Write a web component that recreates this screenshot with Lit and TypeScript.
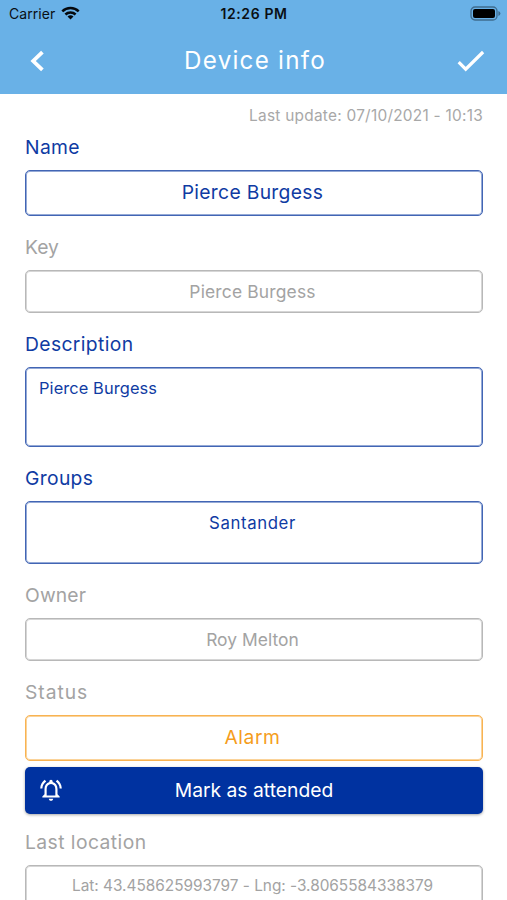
import { LitElement, html, css, nothing } from "lit";
import { customElement, property } from "lit/decorators.js";

type Tone = "editable" | "readonly" | "alarm";

interface Field {
  label: string;
  labelTracking: number;
  value: string;
  tracking: number;
  tone: Tone;
  size: "large" | "medium" | "area" | "group" | "location";
  action?: string;
}

const FIELDS: Field[] = [
  { label: "Name", labelTracking: 0.36, value: "Pierce Burgess", tracking: 0.31, tone: "editable", size: "large" },
  { label: "Key", labelTracking: 0, value: "Pierce Burgess", tracking: 0.18, tone: "readonly", size: "medium" },
  { label: "Description", labelTracking: 0.38, value: "Pierce Burgess", tracking: 0.1, tone: "editable", size: "area" },
  { label: "Groups", labelTracking: 0.33, value: "Santander", tracking: 0.6, tone: "editable", size: "group" },
  { label: "Owner", labelTracking: 0.15, value: "Roy Melton", tracking: 0.05, tone: "readonly", size: "medium" },
  { label: "Status", labelTracking: 0.95, value: "Alarm", tracking: 0.55, tone: "alarm", size: "large", action: "Mark as attended" },
  { label: "Last location", labelTracking: 0.44, value: "Lat: 43.458625993797 - Lng: -3.8065584338379", tracking: -0.02, tone: "readonly", size: "location" },
];

@customElement("status-bar")
export class StatusBar extends LitElement {
  static styles = css`
    :host { display: grid; grid-template-columns: 1fr auto 1fr; height: 28px; align-items: center; color: #0a0f14; }
    .carrier { display: flex; align-items: center; gap: 6px; padding-left: 9px; font: 400 14px/28px Inter, sans-serif; letter-spacing: 0.06px; }
    .time { font: 600 14px/28px Inter, sans-serif; letter-spacing: 0.62px; padding-left: 1px; }
    .battery { justify-self: end; margin-right: 6px; display: block; margin-top: -1px; }
    .wifi { display: block; margin-top: -2px; }
  `;
  render() {
    return html`
      <div class="carrier">
        <span>Carrier</span>
        <svg class="wifi" width="19" height="14" viewBox="0 0 19 14">
          <g fill="none" stroke="#05090d" stroke-width="2.5">
            <path d="M1.3 5.3a11.7 11.7 0 0 1 16.4 0" />
            <path d="M4.4 8.5a7.3 7.3 0 0 1 10.2 0" />
          </g>
          <path d="M9.5 13.6L6.5 10.6a4.3 4.3 0 0 1 6 0z" fill="#05090d" />
        </svg>
      </div>
      <div class="time">12:26 PM</div>
      <svg class="battery" width="31" height="15" viewBox="0 0 31 15">
        <rect x="1" y="1" width="26" height="13" rx="4" fill="none" stroke="#3f6c8f" stroke-width="1.3" />
        <rect x="3" y="3" width="22" height="9" rx="2" fill="#000" />
        <path d="M28.4 5.1q2 .8 2 2.4t-2 2.4z" fill="#3f6c8f" />
      </svg>
    `;
  }
}

@customElement("device-field")
export class DeviceField extends LitElement {
  @property({ attribute: false }) field!: Field;

  static styles = css`
    :host { display: block; }
    .editable { --ink: #0f3ba3; --line: #4265b4; --soft: #94a9d6; }
    .readonly { --ink: #a3a3a3; --line: #b8b8b8; --soft: #d6d6d6; }
    .alarm { --ink: #f59d1c; --line: #f8b352; --soft: #fbd399; }
    .label { font-size: 19.3px; line-height: 24px; color: #a3a3a3; white-space: nowrap; }
    .editable .label { color: var(--ink); }
    .box {
      box-sizing: border-box; margin-top: 11px; border: 1px solid var(--line); border-radius: 5px;
      box-shadow: inset 0 0 0 1px var(--soft); color: var(--ink); text-align: center;
      white-space: nowrap; padding-right: 3px;
    }
    .large { height: 46px; font-size: 19.3px; line-height: 43px; }
    .medium { height: 43px; font-size: 17.4px; line-height: 42px; }
    .area { height: 80px; font-size: 16.4px; line-height: 20px; text-align: left; padding: 10px 13px; }
    .group { height: 63px; font-size: 16.8px; line-height: 20px; padding-top: 11px; }
    .location { height: 43px; font-size: 15.4px; line-height: 40px; }
    .action {
      display: grid; grid-template-columns: 50px 1fr 50px; align-items: center; width: 100%; height: 47px;
      margin-top: 6px; padding: 0; border: 0; border-radius: 5px; background: #0032a0; color: #fff;
      font: 400 19.3px/47px Inter, sans-serif; box-shadow: 0 1px 3px rgba(0, 0, 0, 0.35);
    }
    .bell { display: block; margin: -2px 0 0 13px; }
    .caption { height: 47px; }
  `;

  render() {
    const f = this.field;
    return html`
      <div class=${f.tone}>
        <div class="label" style="letter-spacing:${f.labelTracking}px">${f.label}</div>
        <div class="box ${f.size}" style="letter-spacing:${f.tracking}px">${f.value}</div>
      </div>
      ${f.action
        ? html`<button class="action">
            <svg class="bell" width="26" height="26" viewBox="0 0 24 24" fill="#fff">
              <path d="M12 22c1.1 0 2-.9 2-2h-4c0 1.1.9 2 2 2zm6-6v-5c0-3.07-1.63-5.64-4.5-6.32V4c0-.83-.67-1.5-1.5-1.5s-1.5.67-1.5 1.5v.68C7.64 5.36 6 7.92 6 11v5l-2 2v1h16v-1l-2-2zm-2 1H8v-6c0-2.48 1.51-4.5 4-4.5s4 2.02 4 4.5v6zM7.58 4.08L6.15 2.65C3.75 4.48 2.17 7.3 2.03 10.5h2a8.445 8.445 0 0 1 3.55-6.42zm12.39 6.42h2c-.15-3.2-1.73-6.02-4.12-7.85l-1.42 1.43a8.495 8.495 0 0 1 3.54 6.42z" />
            </svg>
            <span class="caption">${f.action}</span>
          </button>`
        : nothing}
    `;
  }
}

@customElement("app-root")
export class AppRoot extends LitElement {
  static styles = css`
    :host { display: block; height: 900px; overflow: hidden; background: #fff; font-family: Inter, sans-serif; }
    .header { height: 94px; background: #69b1e7; }
    .nav { display: grid; grid-template-columns: 50px 1fr 50px; height: 64px; align-items: center; color: #fff; }
    .back { display: block; margin-left: 30px; }
    .check { display: block; }
    .title { text-align: center; font-size: 24.2px; line-height: 64px; letter-spacing: 1.25px; padding: 1px 0 0 3px; }
    .content { padding: 0 24px 0 25px; }
    .updated { padding-top: 12px; text-align: right; font-size: 15.4px; line-height: 19px; letter-spacing: 0.26px; color: #a8a8a8; }
    .fields { display: flex; flex-direction: column; padding-top: 10px; gap: 19px; }
    .shift-up { margin-top: -3px; }
  `;

  render() {
    return html`
      <div class="header">
        <status-bar></status-bar>
        <div class="nav">
          <svg class="back" width="15" height="22" viewBox="0 0 15 22">
            <path d="M12.4 2.2L3.2 11l9.2 8.8" fill="none" stroke="#fff" stroke-width="3.8" />
          </svg>
          <div class="title">Device info</div>
          <svg class="check" width="29" height="22" viewBox="0 0 29 22">
            <path d="M1.7 12.2l7 7L26.1 2" fill="none" stroke="#fff" stroke-width="3.2" />
          </svg>
        </div>
      </div>
      <div class="content">
        <div class="updated">Last update: 07/10/2021 - 10:13</div>
        <div class="fields">
          ${FIELDS.map(
            (f) => html`<device-field class=${f.size === "location" ? "shift-up" : ""} .field=${f}></device-field>`
          )}
        </div>
      </div>
    `;
  }
}
